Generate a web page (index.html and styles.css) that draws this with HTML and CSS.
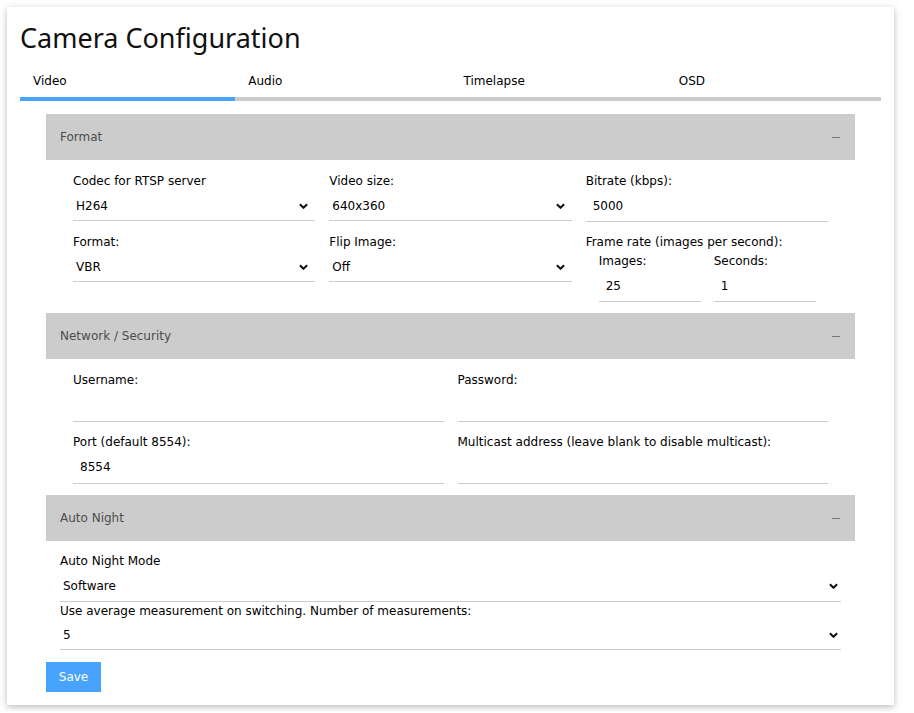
FILE: index.html
```html
<!DOCTYPE html>
<html>
<head>
<meta charset="utf-8">
<link rel="stylesheet" href="styles.css">
</head>
<body>
<div class="card">
  <h1 class="title">Camera Configuration</h1>
  <div class="tabs">
    <div class="tab active">Video</div>
    <div class="tab">Audio</div>
    <div class="tab">Timelapse</div>
    <div class="tab">OSD</div>
  </div>
  <div class="panels">
    <section class="panel">
      <div class="panel-head"><span>Format</span><span class="dash"></span></div>
      <div class="panel-body">
        <div class="row thirds">
          <div class="col">
            <label>Codec for RTSP server</label>
            <div class="select"><span>H264</span><svg class="chev" viewBox="0 0 10 6"><path d="M1 1 L5 5 L9 1" /></svg></div>
            <label class="mt">Format:</label>
            <div class="select"><span>VBR</span><svg class="chev" viewBox="0 0 10 6"><path d="M1 1 L5 5 L9 1" /></svg></div>
          </div>
          <div class="col">
            <label>Video size:</label>
            <div class="select"><span>640x360</span><svg class="chev" viewBox="0 0 10 6"><path d="M1 1 L5 5 L9 1" /></svg></div>
            <label class="mt">Flip Image:</label>
            <div class="select"><span>Off</span><svg class="chev" viewBox="0 0 10 6"><path d="M1 1 L5 5 L9 1" /></svg></div>
          </div>
          <div class="col">
            <label>Bitrate (kbps):</label>
            <div class="input">5000</div>
            <label class="mt short">Frame rate (images per second):</label>
            <div class="sub">
              <div class="subcol">
                <label>Images:</label>
                <div class="input">25</div>
              </div>
              <div class="subcol">
                <label>Seconds:</label>
                <div class="input">1</div>
              </div>
            </div>
          </div>
        </div>
      </div>
    </section>

    <section class="panel">
      <div class="panel-head"><span>Network / Security</span><span class="dash"></span></div>
      <div class="panel-body">
        <div class="row halves">
          <div class="col">
            <label>Username:</label>
            <div class="input tall"></div>
            <label class="mt2">Port (default 8554):</label>
            <div class="input tall">8554</div>
          </div>
          <div class="col">
            <label>Password:</label>
            <div class="input tall"></div>
            <label class="mt2">Multicast address (leave blank to disable multicast):</label>
            <div class="input tall"></div>
          </div>
        </div>
      </div>
    </section>

    <section class="panel">
      <div class="panel-head"><span>Auto Night</span><span class="dash"></span></div>
      <div class="night">
        <label>Auto Night Mode</label>
        <div class="select wide s1"><span>Software</span><svg class="chev" viewBox="0 0 10 6"><path d="M1 1 L5 5 L9 1" /></svg></div>
        <label class="short">Use average measurement on switching. Number of measurements:</label>
        <div class="select wide"><span>5</span><svg class="chev" viewBox="0 0 10 6"><path d="M1 1 L5 5 L9 1" /></svg></div>
      </div>
    </section>
    <button class="save">Save</button>
  </div>
</div>
</body>
</html>
```

FILE: styles.css
```css
* { box-sizing: border-box; }
html, body { margin: 0; padding: 0; background: #fff; }
body {
  padding: 7px;
  font-family: "DejaVu Sans", Verdana, sans-serif;
  font-size: 12px;
  color: #000;
}
.card {
  width: 887px;
  background: #fff;
  box-shadow: 0 2px 5px rgba(0,0,0,0.16), 0 2px 10px rgba(0,0,0,0.12);
  padding: 0 13px 13px 13px;
}
.title {
  margin: 0;
  padding-top: 13px;
  height: 61px;
  font-family: "Noto Sans", "Open Sans", sans-serif;
  font-weight: 400;
  font-size: 27px;
  line-height: 36px;
  color: #111;
}
.tabs {
  display: flex;
  height: 33px;
}
.tab {
  flex: 1;
  padding-left: 13px;
  line-height: 12px;
  padding-top: 7px;
  border-bottom: 4px solid #cccccc;
}
.tab.active { border-bottom-color: #48a3fd; }
.panels {
  margin: 13px 26px 0 26px;
}
.panel-head {
  height: 46px;
  background: #cccccc;
  display: flex;
  align-items: center;
  justify-content: space-between;
  padding: 0 15px 0 14px;
  color: #4d4d4d;
}
.dash {
  width: 8px;
  height: 1px;
  background: #777;
}
.panel-body {
  padding: 11px 20px 11px 20px;
}
.row { display: flex; }
.col { flex: 1; padding: 0 7px; min-width: 0; }
label { display: block; height: 20px; line-height: 20px; }
label.mt { margin-top: 11px; }
label.mt2 { margin-top: 10px; }
label.short { height: 18px; line-height: 18px; }
.select {
  height: 30px;
  border-bottom: 1px solid #cccccc;
  display: flex;
  align-items: center;
  justify-content: space-between;
  padding: 0 7px 0 3px;
}
.chev {
  width: 9px;
  height: 6px;
  fill: none;
  stroke: #111;
  stroke-width: 2.2;
}
.input {
  height: 31px;
  border-bottom: 1px solid #cccccc;
  padding: 0 7px;
  line-height: 30px;
}
.input.tall { height: 32px; line-height: 30px; }
.sub { display: flex; gap: 13px; padding-left: 13px; }
.subcol { width: 102px; }
.night { padding: 10px 14px 0 14px; }
.select.wide { padding-left: 3px; padding-right: 3px; }
.select.s1 { height: 31px; }
.save {
  display: block;
  margin-top: 12px;
  width: 55px;
  height: 30px;
  border: none;
  background: #48a3fd;
  color: #fff;
  font-family: "DejaVu Sans", Verdana, sans-serif;
  font-size: 12px;
  padding: 0;
}
```
